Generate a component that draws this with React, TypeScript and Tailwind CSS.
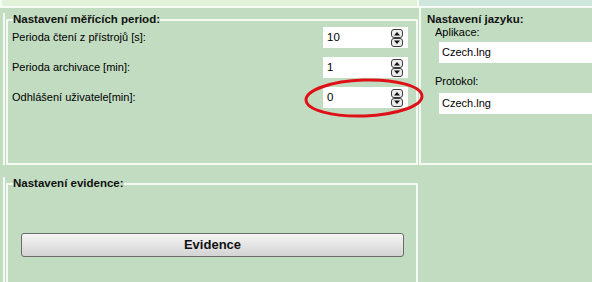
import React from 'react';

const SpinButtons = () => (
  <svg width="12" height="18" viewBox="0 0 12 18" className="shrink-0">
    <rect x="0.5" y="0.5" width="11" height="8" rx="2.5" fill="#ececec" stroke="#3c3c3c" />
    <path d="M3 6.5 L6 3 L9 6.5 Z" fill="#111" />
    <rect x="0.5" y="9.5" width="11" height="8" rx="2.5" fill="#ececec" stroke="#3c3c3c" />
    <path d="M3 11.5 L9 11.5 L6 15 Z" fill="#111" />
  </svg>
);

const periods = [
  { label: 'Perioda čtení z přístrojů [s]:', value: '10' },
  { label: 'Perioda archivace [min]:', value: '1' },
  { label: 'Odhlášení uživatele[min]:', value: '0' },
];

export default function App() {
  return (
    <div className="relative w-[592px] h-[282px] overflow-hidden bg-[#c1dcc0] text-[11px] text-black font-['Liberation_Sans',Arial,sans-serif]">
      {/* Top strip */}
      <div className="flex h-[8px] border-b-2 border-[#f7fbf5]">
        <div className="w-[419px] shrink-0 bg-[#e1f1da] border-l-2 border-r-2 border-[#f7fbf5]" />
        <div className="flex-1 bg-[#cfe6dc]" />
      </div>

      <div className="flex">
        {/* Left column */}
        <div className="w-[418px] shrink-0 pl-[3px] flex flex-col">
          <div className="mt-[5px] border-l-2 border-[#f4faf2] pl-[1px]">
            <fieldset className="h-[152px] border-2 border-[#f4faf2]">
              <legend className="ml-[5px] leading-[13px] text-[11.5px] font-bold text-[#111]">
                Nastavení měřících period:
              </legend>
              <div className="flex flex-col gap-[9px] pt-[1px] pr-[8px]">
                {periods.map((p) => (
                  <div key={p.label} className="flex items-center justify-between h-[21px]">
                    <span className="pl-[4px]">{p.label}</span>
                    <div className="flex items-center justify-between w-[85px] h-[21px] bg-white pl-[4px] pr-[5px]">
                      <span className="text-[11.5px]">{p.value}</span>
                      <SpinButtons />
                    </div>
                  </div>
                ))}
              </div>
            </fieldset>
          </div>

          <div className="mt-[12px] border-l-2 border-[#f4faf2] pl-[1px]">
            <fieldset className="h-[120px] border-2 border-b-0 border-[#f4faf2]">
              <legend className="ml-[5px] leading-[13px] text-[11.5px] font-bold text-[#111]">
                Nastavení evidence:
              </legend>
              <button className="mt-[43px] ml-[13px] w-[383px] h-[24px] rounded-[3px] border border-[#6c6c6c] bg-gradient-to-b from-[#f6f6f6] to-[#d3d3d3] text-[13px] font-bold text-[#111]">
                Evidence
              </button>
            </fieldset>
          </div>
        </div>

        {/* Right column */}
        <div className="flex-1 min-w-0 overflow-hidden flex flex-col">
          <div className="ml-[1px] h-[157px] border-l-2 border-b-2 border-[#f4faf2] pt-[5px] pl-[6px]">
            <div className="leading-[13px] text-[11.5px] font-bold text-[#111]">Nastavení jazyku:</div>
            <div className="ml-[8px] leading-[13px]">Aplikace:</div>
            <div className="mt-[3px] ml-[12px] w-[200px] h-[21px] bg-white pl-[3px] flex items-center">
              Czech.lng
            </div>
            <div className="mt-[12px] ml-[8px] leading-[13px]">Protokol:</div>
            <div className="mt-[5px] ml-[12px] w-[200px] h-[21px] bg-white pl-[3px] flex items-center">
              Czech.lng
            </div>
          </div>
        </div>
      </div>

      {/* Red annotation ellipse */}
      <svg className="absolute left-[303px] top-[77px] pointer-events-none" width="122" height="42" viewBox="0 0 122 42">
        <ellipse cx="61" cy="21" rx="58" ry="18" fill="none" stroke="#e01018" strokeWidth="3" transform="rotate(-2 61 21)" />
      </svg>
    </div>
  );
}
